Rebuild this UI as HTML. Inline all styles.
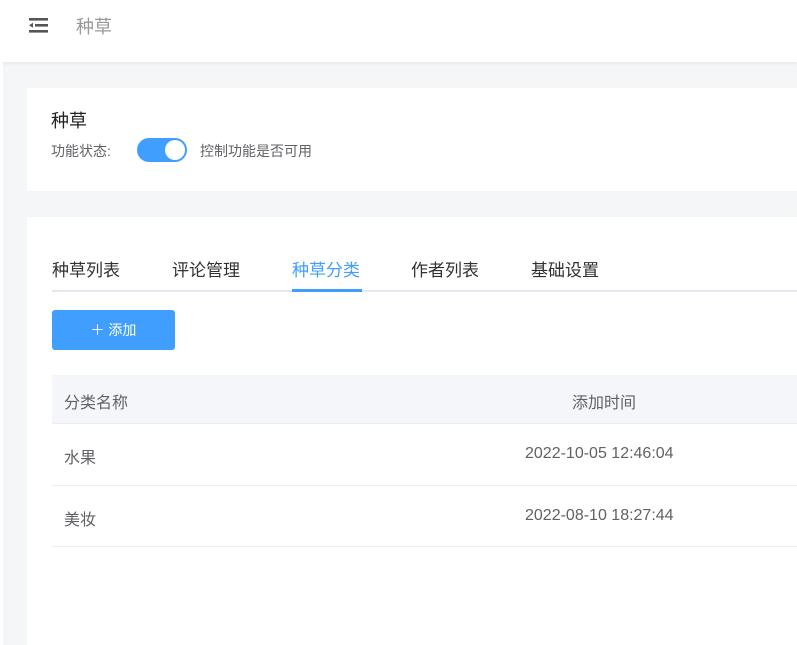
<!DOCTYPE html>
<html><head><meta charset="utf-8"><style>
*{margin:0;padding:0;box-sizing:border-box}
body{width:797px;height:645px;overflow:hidden;background:#f5f6f8;font-family:"Liberation Sans","Noto Sans CJK SC",sans-serif;position:relative}
.hdr{position:absolute;left:0;top:0;width:797px;height:62px;background:#fff;box-shadow:0 1px 4px rgba(0,0,0,.08)}
.side{position:absolute;left:0;top:62px;width:3px;height:583px;background:#fff}
.card{position:absolute;left:27px;width:770px;background:#fff}
.t{position:absolute;white-space:nowrap}
</style></head><body>
<div class="hdr">
<svg style="position:absolute;left:29px;top:17px" width="20" height="17" viewBox="0 0 20 17"><rect x="0" y="1" width="19" height="2.6" fill="#555"/><rect x="6" y="7" width="13" height="2.6" fill="#555"/><rect x="0" y="13" width="19" height="2.6" fill="#555"/><path d="M0 8.3 L4 5.8 L4 10.8Z" fill="#555"/></svg>
<div class="t" style="left:76px;top:13px;font-size:18px;color:#999">种草</div>
</div>
<div class="side"></div>
<div class="card" style="top:88px;height:103px">
<div class="t" style="left:24px;top:19px;font-size:18px;color:#222">种草</div>
<div class="t" style="left:24px;top:53px;font-size:14px;color:#606266">功能状态:</div>
<div style="position:absolute;left:110px;top:50px;width:50px;height:24px;border-radius:12px;background:#409eff"><div style="position:absolute;right:2px;top:2px;width:20px;height:20px;border-radius:50%;background:#fff"></div></div>
<div class="t" style="left:173px;top:53px;font-size:14px;color:#606266">控制功能是否可用</div>
</div>
<div class="card" style="top:217px;height:428px">
<div class="t" style="left:25px;top:39px;font-size:17px;color:#303133">种草列表</div>
<div class="t" style="left:145px;top:39px;font-size:17px;color:#303133">评论管理</div>
<div class="t" style="left:265px;top:39px;font-size:17px;color:#409eff">种草分类</div>
<div class="t" style="left:384px;top:39px;font-size:17px;color:#303133">作者列表</div>
<div class="t" style="left:504px;top:39px;font-size:17px;color:#303133">基础设置</div>
<div style="position:absolute;left:25px;top:73px;width:745px;height:2px;background:#e4e7ed"></div>
<div style="position:absolute;left:265px;top:72px;width:70px;height:3px;background:#409eff"></div>
<div style="position:absolute;left:25px;top:93px;width:123px;height:40px;background:#409eff;border-radius:3px;color:#fff;font-size:14px;line-height:40px;text-align:center">＋ 添加</div>
<div style="position:absolute;left:25px;top:158px;width:745px;height:49px;background:#f5f6f9;border-bottom:1px solid #ebeef5"></div>
<div class="t" style="left:37px;top:172px;font-size:16px;color:#606266">分类名称</div>
<div class="t" style="left:545px;top:172px;font-size:16px;color:#606266">添加时间</div>
<div style="position:absolute;left:25px;top:207px;width:745px;height:62px;border-bottom:1px solid #ebeef5"></div>
<div class="t" style="left:37px;top:227px;font-size:16px;color:#606266">水果</div>
<div class="t" style="left:498px;top:228px;font-size:16px;color:#606266">2022-10-05 12:46:04</div>
<div style="position:absolute;left:25px;top:269px;width:745px;height:61px;border-bottom:1px solid #ebeef5"></div>
<div class="t" style="left:37px;top:289px;font-size:16px;color:#606266">美妆</div>
<div class="t" style="left:498px;top:290px;font-size:16px;color:#606266">2022-08-10 18:27:44</div>
</div>
</body></html>
